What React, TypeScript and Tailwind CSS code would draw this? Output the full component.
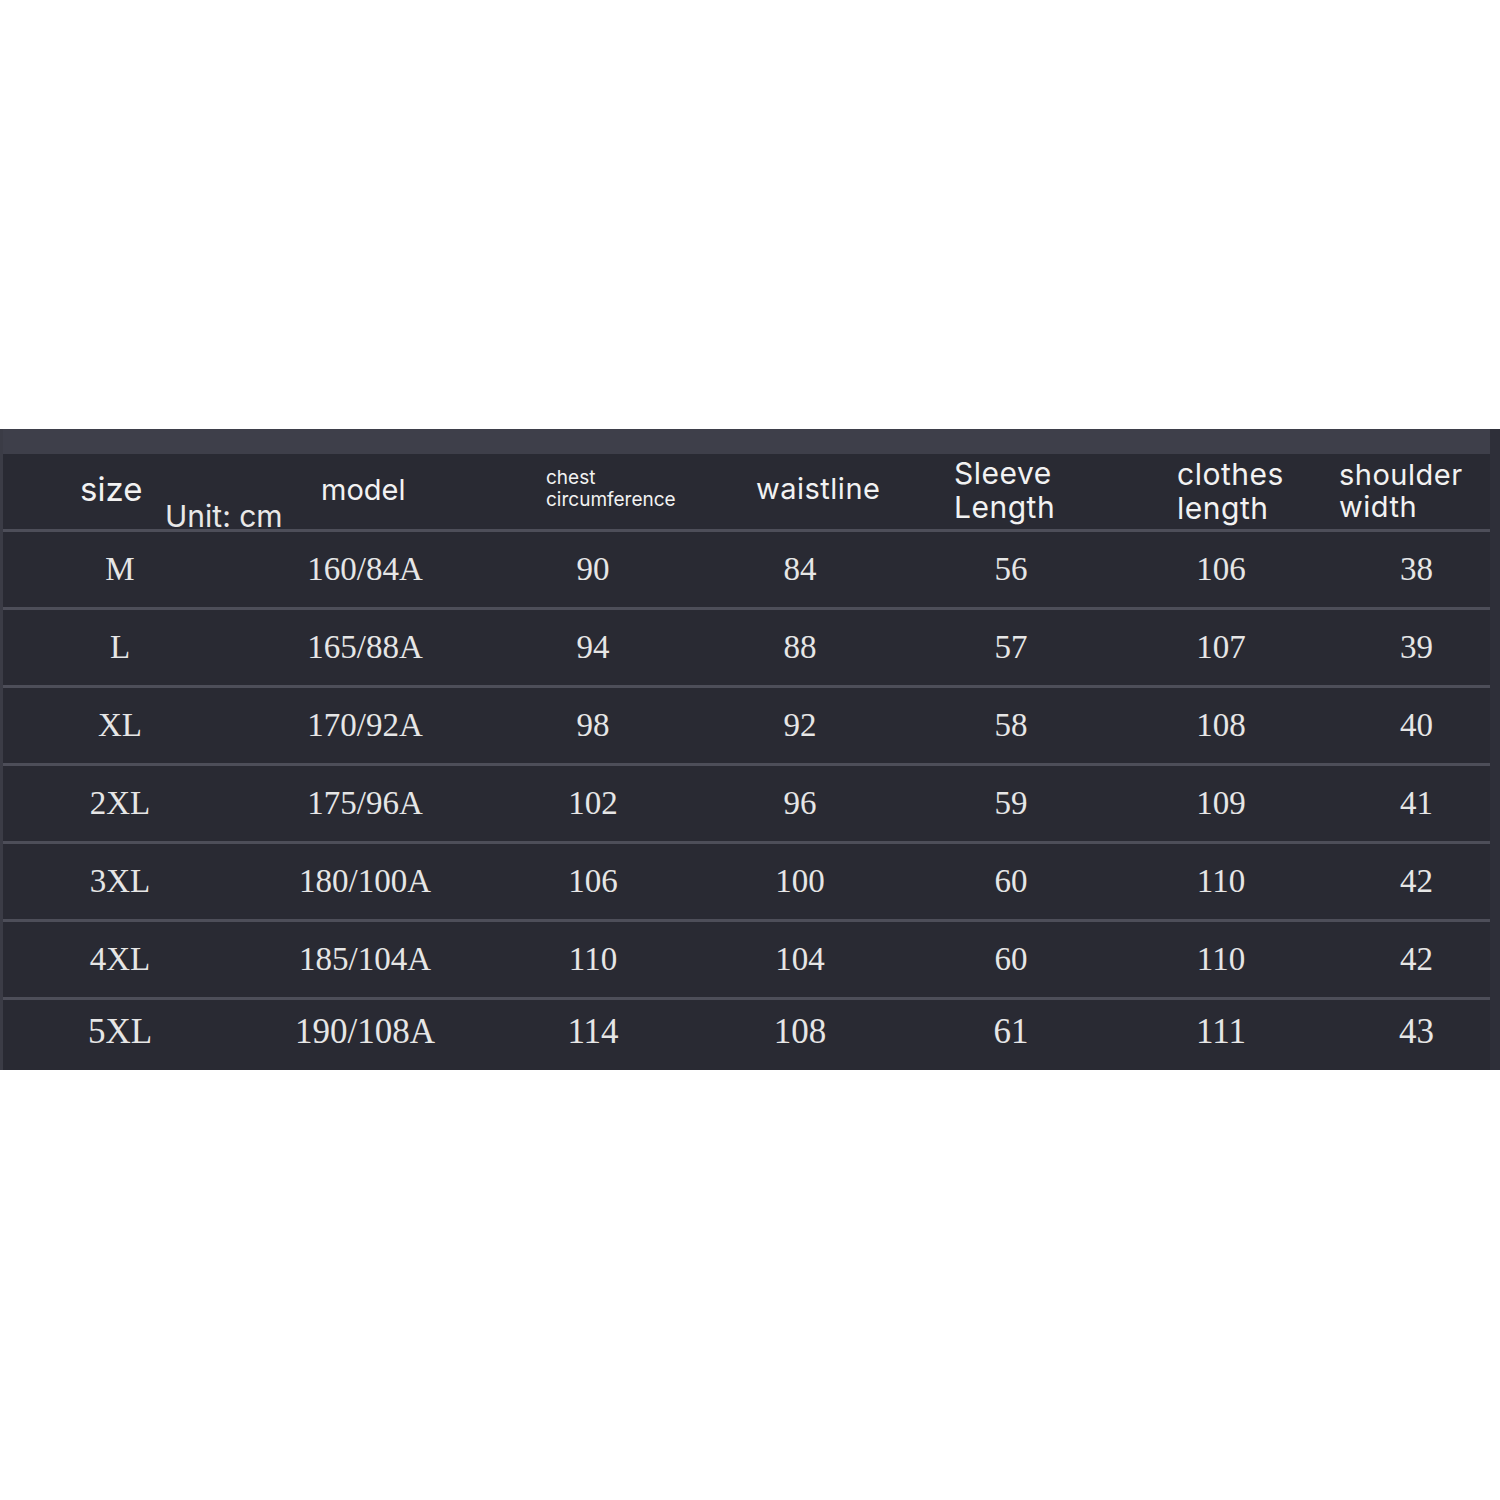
import React from "react";

const rows: string[][] = [
  ["M", "160/84A", "90", "84", "56", "106", "38"],
  ["L", "165/88A", "94", "88", "57", "107", "39"],
  ["XL", "170/92A", "98", "92", "58", "108", "40"],
  ["2XL", "175/96A", "102", "96", "59", "109", "41"],
  ["3XL", "180/100A", "106", "100", "60", "110", "42"],
  ["4XL", "185/104A", "110", "104", "60", "110", "42"],
  ["5XL", "190/108A", "114", "108", "61", "111", "43"],
];

const grid = "grid grid-cols-[234px_256px_200px_214px_208px_212px_1fr]";
const sans = { fontFamily: "Inter, 'Noto Sans', sans-serif" };
const serif = { fontFamily: "'Liberation Serif', 'Times New Roman', serif" };

export default function App() {
  return (
    <div className="w-[1500px] h-[1500px] bg-white pt-[429px]">
      <div className="relative bg-[#292a33] border-l-[3px] border-l-[#3b3c46] border-r-[10px] border-r-[#2e2f39]">
        <div className="h-[25px] bg-[#3e3f4a]" />
        <div className={`${grid} h-[75px] text-[#f2f2f2] relative`} style={sans}>
          <div className="flex items-center pl-[77px] text-[33px] pb-[4px]">size</div>
          <div className="flex items-center pl-[84px] text-[29px] pb-[4px]">model</div>
          <div className="flex flex-col justify-center pl-[53px] text-[19px] leading-[22px] pb-[6px]">
            <span>chest</span>
            <span>circumference</span>
          </div>
          <div className="flex items-center pl-[63px] text-[29px] tracking-[0.5px] pb-[6px]">waistline</div>
          <div className="flex flex-col justify-center pl-[47px] text-[30px] leading-[34px] tracking-[0.5px] pb-[4px]">
            <span>Sleeve</span>
            <span>Length</span>
          </div>
          <div className="flex flex-col justify-center pl-[62px] text-[30px] leading-[34px] tracking-[0.5px] pb-[2px]">
            <span>clothes</span>
            <span>length</span>
          </div>
          <div className="flex flex-col justify-center pl-[12px] text-[29px] leading-[32px] tracking-[0.5px] pb-[2px]">
            <span>shoulder</span>
            <span>width</span>
          </div>
          <div className="absolute left-[162px] top-[46px] text-[30px] leading-[32px] text-[#e8e8e8]">Unit: cm</div>
        </div>
        {rows.map((r, i) => {
          const last = i === rows.length - 1;
          return (
            <div
              key={r[0]}
              className={`${grid} border-t-[3px] border-t-[#4d4e59] ${last ? "h-[73px] text-[35px] pb-[6px]" : "h-[78px] text-[33px]"} text-[#e6e6e6]`}
              style={serif}
            >
              {r.map((c, j) => (
                <div key={j} className={`flex items-center justify-center ${j === 6 ? "pl-[16px]" : ""}`}>
                  {c}
                </div>
              ))}
            </div>
          );
        })}
      </div>
    </div>
  );
}
